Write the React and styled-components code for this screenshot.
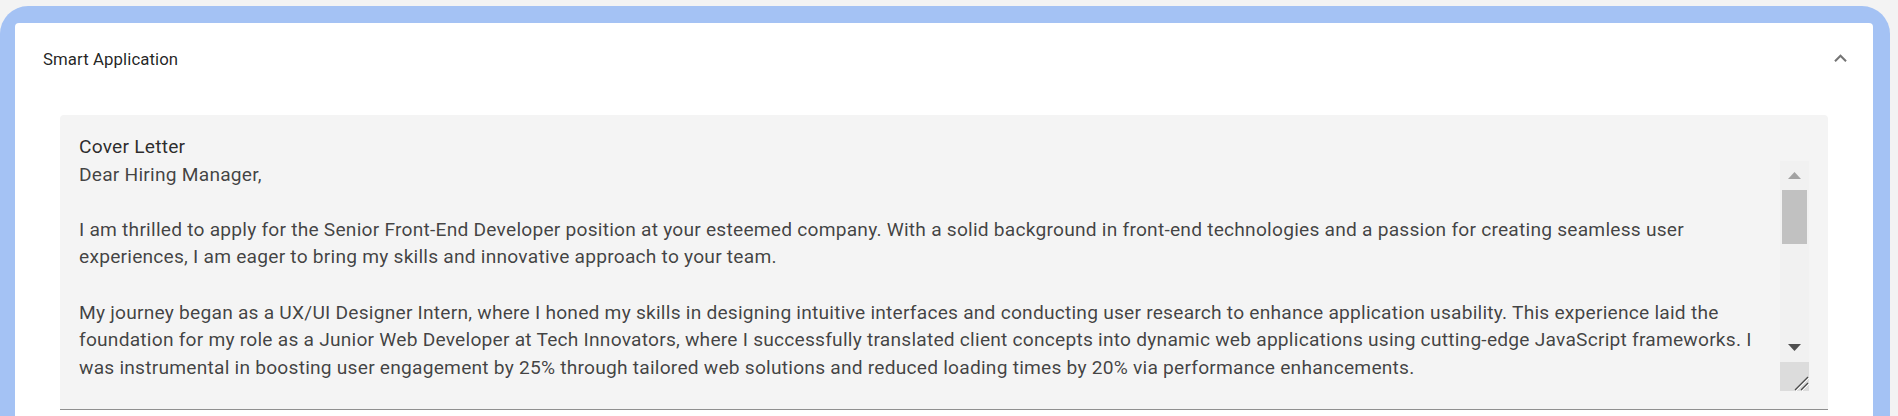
import React from "react";
import styled, { createGlobalStyle } from "styled-components";

const letter = `Dear Hiring Manager,

I am thrilled to apply for the Senior Front-End Developer position at your esteemed company. With a solid background in front-end technologies and a passion for creating seamless user experiences, I am eager to bring my skills and innovative approach to your team.

My journey began as a UX/UI Designer Intern, where I honed my skills in designing intuitive interfaces and conducting user research to enhance application usability. This experience laid the foundation for my role as a Junior Web Developer at Tech Innovators, where I successfully translated client concepts into dynamic web applications using cutting-edge JavaScript frameworks. I was instrumental in boosting user engagement by 25% through tailored web solutions and reduced loading times by 20% via performance enhancements.

Most recently, as a Front-End Developer at Creative Solutions, I led the redesign of key customer-facing products, collaborating closely with designers and back-end engineers to deliver accessible, responsive interfaces.

I would welcome the opportunity to discuss how my experience can contribute to your team.

Sincerely,`;

const GlobalStyle = createGlobalStyle`
  html, body {
    margin: 0;
    padding: 0;
    background: #f3f3f3;
    overflow: hidden;
  }
  body {
    font-family: Roboto, "Liberation Sans", sans-serif;
  }
`;

const Frame = styled.div`
  margin: 6px 8px 0 0;
  padding: 17px 17px 0 15px;
  min-height: 420px;
  background: #a4c2f4;
  border-radius: 28px 28px 0 0;
  box-sizing: border-box;
`;

const Card = styled.section`
  background: #fff;
  border-radius: 4px 4px 0 0;
  min-height: 410px;
`;

const Header = styled.div`
  display: flex;
  align-items: center;
  justify-content: space-between;
  height: 77px;
  padding: 0 20px 0 28px;
`;

const Title = styled.h2`
  margin: -5px 0 0;
  font-family: Roboto, "Liberation Sans", sans-serif;
  font-size: 16.8px;
  font-weight: 400;
  color: rgba(0, 0, 0, 0.87);
  letter-spacing: 0.08px;
`;

const ToggleIcon = styled.svg`
  width: 25px;
  height: 25px;
  margin-top: -6px;
  fill: #757575;
`;

const Details = styled.div`
  padding: 15px 45px 0 45px;
`;

const Field = styled.div`
  background: #f4f4f4;
  border-radius: 4px 4px 0 0;
  border-bottom: 1px solid #8f8f8f;
  padding: 18px 19px 18px 19px;
`;

const Label = styled.label`
  display: block;
  font-size: 19.2px;
  line-height: 27.6px;
  letter-spacing: 0.22px;
  color: rgba(0, 0, 0, 0.84);
`;

const InputWrap = styled.div`
  position: relative;
  height: 230px;
`;

const TextArea = styled.textarea`
  display: block;
  box-sizing: border-box;
  width: 100%;
  height: 100%;
  margin: 0;
  padding: 0 29px 0 0;
  border: none;
  outline: none;
  resize: none;
  overflow: hidden;
  background: transparent;
  font-family: Roboto, "Liberation Sans", sans-serif;
  font-size: 19.2px;
  line-height: 27.6px;
  letter-spacing: 0.22px;
  color: rgba(0, 0, 0, 0.74);
`;

const Scrollbar = styled.div`
  position: absolute;
  top: 0;
  right: 0;
  bottom: 0;
  width: 29px;
  display: flex;
  flex-direction: column;
  background: #f1f1f1;
`;

const ScrollButton = styled.div`
  height: 29px;
  display: flex;
  align-items: center;
  justify-content: center;
  flex-shrink: 0;

  svg {
    width: 13px;
    height: 7px;
    fill: ${(p) => (p.$active ? "#505050" : "#a3a3a3")};
  }
`;

const Track = styled.div`
  flex: 1;
  padding: 0 2px;
`;

const Thumb = styled.div`
  height: 54px;
  background: #c1c1c1;
`;

const Resizer = styled.div`
  height: 29px;
  flex-shrink: 0;
  background: #dcdcdc;
  display: flex;
  align-items: flex-end;
  justify-content: flex-end;

  svg {
    width: 16px;
    height: 16px;
    display: block;
  }
`;

export default function App() {
  return (
    <>
      <GlobalStyle />
      <Frame>
        <Card>
          <Header>
            <Title>Smart Application</Title>
            <ToggleIcon viewBox="0 0 24 24" aria-hidden="true">
              <path d="M12 8l-6 6 1.41 1.41L12 10.83l4.59 4.58L18 14z" />
            </ToggleIcon>
          </Header>
          <Details>
            <Field>
              <Label htmlFor="cover-letter">Cover Letter</Label>
              <InputWrap>
                <TextArea id="cover-letter" defaultValue={letter} spellCheck={false} />
                <Scrollbar>
                  <ScrollButton>
                    <svg viewBox="0 0 13 7">
                      <polygon points="6.5,0 13,7 0,7" />
                    </svg>
                  </ScrollButton>
                  <Track>
                    <Thumb />
                  </Track>
                  <ScrollButton $active>
                    <svg viewBox="0 0 13 7">
                      <polygon points="0,0 13,0 6.5,7" />
                    </svg>
                  </ScrollButton>
                  <Resizer>
                    <svg viewBox="0 0 16 16">
                      <line x1="2" y1="15" x2="15" y2="2" stroke="#4a4a4a" strokeWidth="1.2" />
                      <line x1="3" y1="16" x2="16" y2="3" stroke="#ffffff" strokeWidth="1" />
                      <line x1="8" y1="15" x2="15" y2="8" stroke="#4a4a4a" strokeWidth="1.2" />
                      <line x1="9" y1="16" x2="16" y2="9" stroke="#ffffff" strokeWidth="1" />
                    </svg>
                  </Resizer>
                </Scrollbar>
              </InputWrap>
            </Field>
          </Details>
        </Card>
      </Frame>
    </>
  );
}
